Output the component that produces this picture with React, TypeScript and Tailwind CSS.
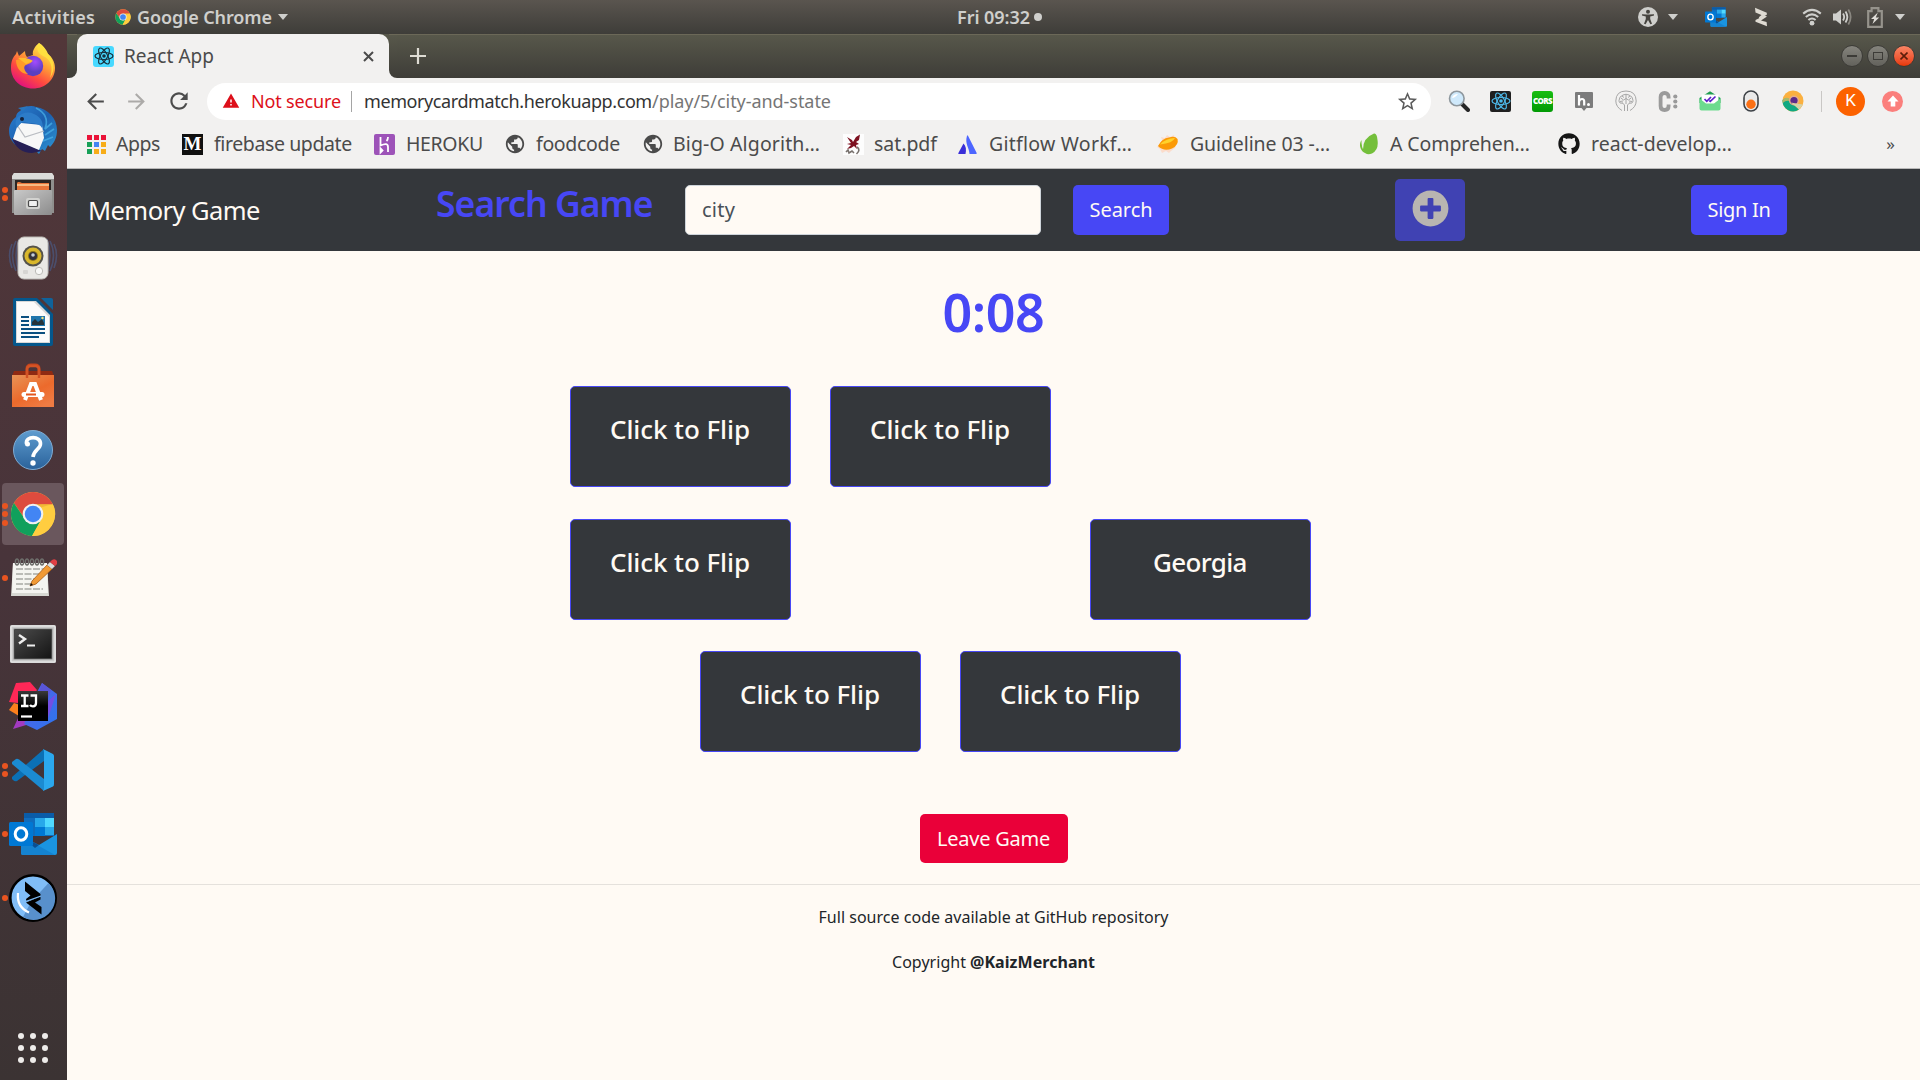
import { useLayoutEffect, useRef, type ReactNode } from "react";
import { FaGithub, FaPlusCircle } from "react-icons/fa";
import { MdPublic, MdRefresh, MdArrowBack, MdArrowForward, MdStarBorder, MdWarning } from "react-icons/md";

/* Text that spreads its letters evenly so that it fills the given width. */
function Fit({ w, className = "", children }: { w: number; className?: string; children: ReactNode }) {
  const inner = useRef<HTMLSpanElement>(null);
  useLayoutEffect(() => {
    const el = inner.current;
    if (!el) return;
    el.style.letterSpacing = "0px";
    const natural = el.getBoundingClientRect().width;
    const count = (el.textContent || "").length;
    el.style.letterSpacing = `${(w - natural) / Math.max(1, count - 0.5)}px`;
  }, [w]);
  return (
    <span style={{ width: w }} className={`block shrink-0 whitespace-nowrap ${className}`}>
      <span ref={inner}>{children}</span>
    </span>
  );
}

function ReactLogo({ size, color }: { size: number; color: string }) {
  return (
    <svg width={size} height={size} viewBox="0 0 20 20" fill="none" stroke={color} strokeWidth="1.2" className="shrink-0">
      <ellipse cx="10" cy="10" rx="9" ry="3.5" />
      <ellipse cx="10" cy="10" rx="9" ry="3.5" transform="rotate(60 10 10)" />
      <ellipse cx="10" cy="10" rx="9" ry="3.5" transform="rotate(120 10 10)" />
      <circle cx="10" cy="10" r="1.8" fill={color} stroke="none" />
    </svg>
  );
}

function ChromeLogo({ size }: { size: number }) {
  return (
    <svg width={size} height={size} viewBox="0 0 48 48" className="shrink-0">
      <circle cx="24" cy="24" r="23" fill="#ffcd40" />
      <path d="M4.1 12.5A23 23 0 0 1 43.9 12.5L44.3 14H24L15.5 29Z" fill="#dd4b3e" />
      <path d="M4.1 12.5A23 23 0 0 0 23 47L33 29.5L24 34.5L15.3 29Z" fill="#10a05c" />
      <path d="M43.9 12.5A23 23 0 0 1 23 47L33 29L31 14H44.5Z" fill="#ffcd40" />
      <path d="M24 13.5H44.4L33 17Z" fill="#e3a42e" opacity=".5" />
      <circle cx="24" cy="24" r="10.8" fill="#f1f1f1" />
      <circle cx="24" cy="24" r="8.6" fill="#4285f4" />
    </svg>
  );
}

function OutlookLogo({ size }: { size: number }) {
  return (
    <svg width={size} height={size} viewBox="0 0 48 48" className="shrink-0">
      <path d="M15 3H45V26H15Z" fill="#0f6cbd" />
      <path d="M15 3H45V8H15Z" fill="#0a5ca8" />
      <path d="M26 8H36V17H26Z" fill="#28a8ea" />
      <path d="M36 8H45V17H36Z" fill="#50d9ff" />
      <path d="M26 17H36V26H26Z" fill="#0078d4" />
      <path d="M36 17H45V25H36Z" fill="#28a8ea" />
      <path d="M12 26L30 35L48 24V43Q48 45 46 45H14Q12 45 12 43Z" fill="#1a94e0" />
      <path d="M12 26L46 45H14Q12 45 12 43Z" fill="#1583d0" />
      <path d="M12 26L30 35L26 38Z" fill="#0a4f92" />
      <rect x="0" y="12" width="24" height="24" rx="1.5" fill="#0078d4" />
      <ellipse cx="12" cy="24" rx="5.8" ry="6.2" fill="none" stroke="#fff" strokeWidth="3" />
    </svg>
  );
}

function Caret() {
  return (
    <svg width="10" height="6" viewBox="0 0 10 6" className="shrink-0">
      <path d="M0 0H10L5 6Z" fill="#cfcfcc" />
    </svg>
  );
}

function TopBar() {
  return (
    <header className="flex h-[34px] shrink-0 items-center bg-linear-to-b from-[#5a554f] to-[#3e3d39] text-[18px] font-semibold text-[#cfcfcc]">
      <Fit w={83} className="ml-3">Activities</Fit>
      <div className="ml-[20px] flex"><ChromeLogo size={16} /></div>
      <Fit w={135} className="ml-[6px]">Google Chrome</Fit>
      <div className="ml-[6px] flex"><Caret /></div>
      <Fit w={73} className="ml-[669px]">Fri 09:32</Fit>
      <span className="ml-1 h-2 w-2 rounded-full bg-[#cfcfcc]" />
      <div className="ml-auto flex items-center pr-[15px]">
        <svg width="20" height="20" viewBox="0 0 20 20">
          <circle cx="10" cy="10" r="10" fill="#cfcfcc" />
          <circle cx="10" cy="4.8" r="2" fill="#46443f" />
          <path d="M4 7.2L8.600 7.600H11.400L16 7.200V8.500L12.200 9.400V12L14 16.800L12.400 17.200L10 13L7.600 17.200L6 16.800L7.800 12V9.400L4 8.500Z" fill="#46443f" />
        </svg>
        <div className="ml-[10px] flex"><Caret /></div>
        <div className="ml-[27px] flex"><OutlookLogo size={22} /></div>
        <svg width="14" height="20" viewBox="0 0 14 20" className="ml-[27px]">
          <path d="M1 .8L12.800 5.800V7.800L5.600 11.500L4.800 10.200L7.500 8L1.500 5.500Z" fill="#dfdbd3" />
          <path d="M10.500 8.500L1.500 13V14.800L13 19.300L12.600 15L7 13.500L13 9.600Z" fill="#dfdbd3" />
        </svg>
        <svg width="20" height="18" viewBox="0 0 20 18" className="ml-[34px]" fill="none" stroke="#cfcfcc" strokeWidth="2.1">
          <path d="M1.200 5.600Q10-1.800 18.800 5.600" />
          <path d="M3.800 9Q10 3.800 16.200 9" />
          <path d="M6.400 12Q10 9 13.600 12" />
          <circle cx="10" cy="15.200" r="2.400" fill="#cfcfcc" stroke="none" />
        </svg>
        <svg width="20" height="16" viewBox="0 0 20 16" className="ml-[11px]" fill="none" stroke="#cfcfcc" strokeWidth="1.800">
          <path d="M0 4.500H3L8 .5V15.500L3 11.500H0Z" fill="#cfcfcc" stroke="none" />
          <path d="M10 4.500Q12.300 8 10 11.500" />
          <path d="M12.500 2.500Q16.200 8 12.500 13.500" />
          <path d="M15.300 .5Q20 8 15.300 15.500" stroke="#8a8780" />
        </svg>
        <svg width="16" height="21" viewBox="0 0 16 21" className="ml-[14px]">
          <path d="M1.200 4.200H4.600V1.200H11.400V4.200H14.800V19.800H1.200Z" fill="none" stroke="#96938c" strokeWidth="2.200" />
          <path d="M10.800 5.500L4 12H7.200L5.500 17L12.200 10.600H8.800Z" fill="#e0ddd8" />
        </svg>
        <div className="ml-[12px] flex"><Caret /></div>
      </div>
    </header>
  );
}

function FirefoxIcon() {
  return (
    <svg width="48" height="48" viewBox="0 0 48 48">
      <defs>
        <linearGradient id="ffBody" x1="0.85" y1="0.1" x2="0.3" y2="1">
          <stop offset="0" stopColor="#fff44f" />
          <stop offset=".35" stopColor="#ffa436" />
          <stop offset=".68" stopColor="#ff4a3f" />
          <stop offset="1" stopColor="#e0107f" />
        </linearGradient>
        <radialGradient id="ffGlobe" cx=".6" cy=".3">
          <stop offset="0" stopColor="#a34bff" />
          <stop offset="1" stopColor="#5b3fc0" />
        </radialGradient>
      </defs>
      <path d="M30 1C36 5 38 9 39 12C43 15 46 20 46 26C46 38 36 46.500 24 46.500C11 46.500 2 37 2 26C2 19 4 15 7 12L8 9L10 14L16 9C16 12 17 14 18 15L24 13C23 9 26 4 30 1Z" fill="url(#ffBody)" />
      <path d="M37 10C45 16 47 28 41 36C45 24 41 17 34 14C28 11 27 6 30 1C34 3 36 7 37 10Z" fill="#ffe23e" opacity=".85" />
      <circle cx="24" cy="24" r="10.200" fill="url(#ffGlobe)" />
      <path d="M7 18C13 16 20 17 23 19C22 22 18 22 17 23C14 24 15 29 19 32C12 32 7 26 7 18Z" fill="#ff9b28" />
      <path d="M9 16C16 15 21 17 24 19L17 22Z" fill="#ffbd2d" />
    </svg>
  );
}

function ThunderbirdIcon() {
  return (
    <svg width="50" height="50" viewBox="0 0 50 50">
      <defs>
        <linearGradient id="tb" x1="0" y1="0" x2="1" y2="1">
          <stop offset="0" stopColor="#2a7fd0" />
          <stop offset=".5" stopColor="#1c5fae" />
          <stop offset="1" stopColor="#2f9ad8" />
        </linearGradient>
      </defs>
      <path d="M12 6C16 1 24 0 28 2C40 4 49 13 49 25C49 33 46 38 42 42L40 40L37 46L34 44L31 49L28 46C14 47 1 39 1 26C1 20 4 15 8 12C8 9 10 7 12 6Z" fill="url(#tb)" />
      <path d="M4 33L34 46L24 48C14 48 7 42 4 33Z" fill="#261f56" />
      <path d="M13 18L34 20L36 33L31 45L5 34L9 22Z" fill="#f7f7f7" />
      <path d="M9 20L17 32L36 26" fill="none" stroke="#b9bcc2" strokeWidth="1.200" />
      <path d="M9 13C13 8 20 6 26 9C33 12 36 18 34 23C31 17 22 19 16 17C13 17 11 20 9 23C7 20 7 16 9 13Z" fill="#2d7cc9" />
      <path d="M28 3C38 8 40 16 37 24L44 18M37 30L46 24M35 36L45 32" fill="none" stroke="#4cb4ea" strokeWidth="1.700" opacity=".7" />
      <circle cx="14" cy="14" r="2" fill="#15233d" />
      <path d="M10 3L20 1L15 6Z" fill="#2977be" />
    </svg>
  );
}

function FilesIcon() {
  return (
    <svg width="46" height="46" viewBox="0 0 46 46">
      <defs>
        <linearGradient id="fl" x1="0" y1="0" x2="1" y2="1">
          <stop offset="0" stopColor="#c9c9c9" />
          <stop offset="1" stopColor="#8c8c8c" />
        </linearGradient>
      </defs>
      <path d="M4 2H42L44 5V42H2V5Z" fill="#8f8f8d" />
      <path d="M4 2H42L44 5V8H2V5Z" fill="#dcdcda" />
      <rect x="5" y="9" width="36" height="10" fill="#2b2523" />
      <path d="M7 12Q8 10 12 12H39V19H7Z" fill="#e8763a" />
      <path d="M7 14H39" stroke="#fbd29d" strokeWidth="1.500" />
      <rect x="4" y="19" width="38" height="25" rx="1" fill="url(#fl)" />
      <rect x="16" y="27" width="14" height="11" rx="2" fill="#d2d2d0" />
      <rect x="18.500" y="29.500" width="9" height="6" rx="1" fill="#f0f0f0" stroke="#4b4b4b" strokeWidth="1.200" />
    </svg>
  );
}

function RhythmboxIcon() {
  return (
    <svg width="50" height="46" viewBox="0 0 50 46">
      <g fill="none" stroke="#4a5f8e" strokeWidth="1.600" opacity=".6">
        <path d="M8 6Q1 20 8 36M4 9Q-1 20 4 33M42 6Q49 20 42 36M46 9Q51 20 46 33M11 4Q5 20 11 38M39 4Q45 20 39 38" />
      </g>
      <rect x="10" y="2" width="30" height="42" rx="6" fill="#e9e8e5" stroke="#bdbbb6" />
      <circle cx="25" cy="21" r="10.500" fill="#55534b" />
      <circle cx="25" cy="21" r="8.500" fill="#d9b72c" />
      <circle cx="25" cy="21" r="5" fill="#8c741c" />
      <circle cx="25" cy="21" r="4" fill="#33323a" />
      <circle cx="25" cy="20" r="1.800" fill="#c5ced8" />
      <circle cx="31" cy="36" r="3.700" fill="#f8f8f6" stroke="#bcbbb7" />
      <rect x="15" y="35" width="5" height="4" rx="1" fill="#d6d5d2" />
    </svg>
  );
}

function WriterIcon() {
  return (
    <svg width="42" height="50" viewBox="0 0 42 50">
      <path d="M1 3Q1 1 3 1H25L41 17V47Q41 49 39 49H3Q1 49 1 47Z" fill="#04578c" />
      <path d="M29 1H39Q41 1 41 3V13Z" fill="#0f639b" />
      <path d="M4 4H24L38 18V46H4Z" fill="#d7d7d7" />
      <path d="M5 5H22L37 20V45H5Z" fill="#fbfbfb" />
      <path d="M9 20H17M9 24H17M9 28H17M9 32H33M9 36H33M9 40H27" stroke="#0a4f80" strokeWidth="2" />
      <rect x="19" y="19" width="14" height="10" fill="#1f76ad" />
      <path d="M20 28V25L23 22L26 25L30 22L32 26V28Z" fill="#27343a" />
      <circle cx="30.500" cy="21" r="1.200" fill="#f5e37d" />
    </svg>
  );
}

function SoftwareIcon() {
  return (
    <svg width="44" height="46" viewBox="0 0 44 46">
      <defs>
        <linearGradient id="bag" x1="0" y1="0" x2=".7" y2="1">
          <stop offset="0" stopColor="#e79457" />
          <stop offset=".6" stopColor="#ec6a2c" />
          <stop offset="1" stopColor="#ef7b43" />
        </linearGradient>
      </defs>
      <path d="M1 13L3 8H41L43 13Z" fill="#8f2a12" />
      <path d="M16 15V6Q16 2 20 2H24Q28 2 28 6V15" fill="none" stroke="#c7451c" strokeWidth="3" />
      <path d="M1 12H43V44H1Z" fill="url(#bag)" />
      <path d="M16 15V6Q16 4 19 3H25Q28 4 28 6V15" fill="none" stroke="#d35325" strokeWidth="2.400" />
      <path d="M14 37L20 21H24L30 37M17 31H27" fill="none" stroke="#fff" strokeWidth="4" />
      <path d="M13 31.500H31" stroke="#fff" strokeWidth="5" strokeLinecap="round" />
      <path d="M15 31.500H25" stroke="#e2571f" strokeWidth="2" />
    </svg>
  );
}

function HelpIcon() {
  return (
    <svg width="44" height="44" viewBox="0 0 44 44">
      <defs>
        <linearGradient id="hp" x1="0" y1="0" x2="0" y2="1">
          <stop offset="0" stopColor="#5f9ccf" />
          <stop offset="1" stopColor="#2a629b" />
        </linearGradient>
      </defs>
      <circle cx="22" cy="22" r="19.500" fill="url(#hp)" stroke="#7facd4" strokeWidth="1" />
      <path d="M15.500 16C14 7.500 30 7.500 29.500 16C29.500 21 22.500 22 22 29" fill="none" stroke="#fff" strokeWidth="3.600" />
      <circle cx="16.500" cy="16" r="2.500" fill="#fff" />
      <circle cx="22" cy="35" r="2.700" fill="#fff" />
    </svg>
  );
}

function EditorIcon() {
  return (
    <svg width="48" height="42" viewBox="0 0 48 42">
      <path d="M4 6H38L40 39H2Z" fill="#d8d9d3" />
      <path d="M4 6H38L39 36H3Z" fill="#f5f5f1" />
      <path d="M7 12H35M7 17H32M7 22H30M7 27H26M7 32H34" stroke="#a8a9a4" strokeWidth="1.300" strokeDasharray="7 1.500" />
      <g fill="none" stroke="#6d6e6b" strokeWidth="1.500">
        <ellipse cx="8" cy="5" rx="1.600" ry="3" /><ellipse cx="13" cy="5" rx="1.600" ry="3" /><ellipse cx="18" cy="5" rx="1.600" ry="3" />
        <ellipse cx="23" cy="5" rx="1.600" ry="3" /><ellipse cx="28" cy="5" rx="1.600" ry="3" /><ellipse cx="33" cy="5" rx="1.600" ry="3" />
      </g>
      <path d="M21 29L23 24L38 8L43 12L27 27Z" fill="#f19a35" stroke="#a85c16" strokeWidth=".8" />
      <path d="M38 8L41 5L46 9L43 12Z" fill="#d9dcdc" />
      <path d="M41 5L43 3Q46 1 48 4Q49 7 46 9Z" fill="#df3e44" />
      <path d="M21 29L22 26L24 28Z" fill="#111" />
    </svg>
  );
}

function TerminalIcon() {
  return (
    <svg width="46" height="38" viewBox="0 0 46 38" className="mt-[4px]">
      <defs>
        <linearGradient id="tm" x1="0" y1="0" x2="1" y2="1">
          <stop offset="0" stopColor="#4a4a4a" />
          <stop offset="1" stopColor="#151515" />
        </linearGradient>
      </defs>
      <rect x="0" y="0" width="46" height="38" rx="1.500" fill="#c9c9c9" />
      <rect x="1" y="1" width="44" height="36" rx="1" fill="none" stroke="#efefef" />
      <rect x="4" y="4" width="38" height="30" fill="#222" stroke="#777" strokeWidth=".8" />
      <path d="M5 5H41V33H5Z" fill="url(#tm)" />
      <path d="M9 10L15 14L9 18.500" fill="none" stroke="#eee" strokeWidth="2.400" />
      <path d="M17 20.500H25" stroke="#eee" strokeWidth="2" />
    </svg>
  );
}

function IntellijIcon() {
  return (
    <svg width="48" height="48" viewBox="0 0 48 48">
      <defs>
        <linearGradient id="ijb" x1="0" y1="0" x2="1" y2="1">
          <stop offset="0" stopColor="#5b5ce0" />
          <stop offset="1" stopColor="#2b76f0" />
        </linearGradient>
        <linearGradient id="ijk" x1="0" y1="0" x2="0" y2="1">
          <stop offset="0" stopColor="#3a3a3a" />
          <stop offset=".5" stopColor="#000" />
        </linearGradient>
      </defs>
      <path d="M7 1L21 0L28 8L18 22L0 20Z" fill="#fe2857" />
      <path d="M5 21L14 24L10 34L0 28Z" fill="#fc801d" />
      <path d="M10 34L4 47L27 40L24 28Z" fill="#a23ac0" />
      <path d="M33 1L48 12V37L28 48L15 42L28 10Z" fill="url(#ijb)" />
      <path d="M33 1L42 8L38 20L26 24Z" fill="#5a55d8" />
      <path d="M39 19L47 12L39 36Z" fill="#8b42e0" opacity=".7" />
      <rect x="9" y="9" width="30" height="30" fill="url(#ijk)" />
      <path d="M12 13.500H19.500M15.700 13.500V24M12 24H19.500M21.500 13.500H27V21Q27 24.300 24 24.300Q22 24.300 21 23" fill="none" stroke="#fff" strokeWidth="2.300" />
      <path d="M12 34.500H23" stroke="#fff" strokeWidth="2.200" />
    </svg>
  );
}

function VsCodeIcon() {
  return (
    <svg width="42" height="42" viewBox="0 0 42 42">
      <path d="M0 28L32 0V12L5 32Q3 33 1 31L0 30Z" fill="#0b70b5" />
      <path d="M0 13L4 10Q5.500 9.500 7 10.500L32 30V42L0 15Z" fill="#1b8bd2" />
      <path d="M31 0L41 5Q42 6 42 7V35Q42 37 41 37.500L31 42Q32 41 32 39V3Q32 1 31 0Z" fill="#2ba8ee" />
    </svg>
  );
}

function ZealIcon() {
  return (
    <svg width="48" height="48" viewBox="0 0 48 48">
      <circle cx="24" cy="24" r="22.700" fill="#80bdf7" stroke="#000" strokeWidth="2.600" />
      <path d="M39.500 9A21.400 21.400 0 0 1 14 43L22 28Z" fill="#5890cc" />
      <path d="M9 19Q7.500 33 20 38.500" fill="none" stroke="#fff" strokeWidth="2.200" />
      <path d="M16 7.500L31.500 20V22.500L17.500 27.500L17 25L21.500 21.500L16 17Z" fill="#000" />
      <path d="M31.500 22.500L17 28.500L32.500 40.500V33L26 28.500L31.500 25.500Z" fill="#000" />
      <path d="M16.500 27.500L32 22" stroke="#80bdf7" strokeWidth="1.300" />
    </svg>
  );
}

const DOCK: { icon: ReactNode; dots: number; active?: boolean }[] = [
  { icon: <FirefoxIcon />, dots: 0 },
  { icon: <ThunderbirdIcon />, dots: 0 },
  { icon: <FilesIcon />, dots: 2 },
  { icon: <RhythmboxIcon />, dots: 0 },
  { icon: <WriterIcon />, dots: 0 },
  { icon: <SoftwareIcon />, dots: 0 },
  { icon: <HelpIcon />, dots: 0 },
  { icon: <ChromeLogo size={46} />, dots: 3, active: true },
  { icon: <EditorIcon />, dots: 1 },
  { icon: <TerminalIcon />, dots: 0 },
  { icon: <IntellijIcon />, dots: 0 },
  { icon: <VsCodeIcon />, dots: 2 },
  { icon: <OutlookLogo size={48} />, dots: 1 },
  { icon: <ZealIcon />, dots: 1 },
];

function Dock() {
  return (
    <aside className="flex w-[67px] shrink-0 flex-col bg-linear-to-b from-[#523739] via-[#48343a] to-[#3b3333]">
      {DOCK.map((item, i) => (
        <div key={i} className="flex h-16 shrink-0 items-center">
          <div className={`ml-0.5 flex h-[62px] w-[62px] items-center rounded-[4px] ${item.active ? "bg-[#6a575d]" : ""}`}>
            <div className="flex w-[6px] shrink-0 flex-col gap-[2.5px]">
              {Array.from({ length: item.dots }, (_, d) => (
                <span key={d} className="h-[6px] w-[6px] rounded-full bg-[#e95420]" />
              ))}
            </div>
            <div className="-ml-[2px] flex w-[54px] shrink-0 justify-center">{item.icon}</div>
          </div>
        </div>
      ))}
      <div className="mt-auto mb-[17px] grid grid-cols-3 gap-[6px] self-center pr-px">
        {Array.from({ length: 9 }, (_, i) => (
          <span key={i} className="h-[6px] w-[6px] rounded-full bg-[#eeecea]" />
        ))}
      </div>
    </aside>
  );
}

function TabStrip() {
  return (
    <div className="flex h-11 shrink-0 items-stretch bg-linear-to-b from-[#58584b] to-[#3e3d38]">
      <div className="flex w-[10px] items-end bg-[#f2f1f0]">
        <span className="h-full w-full rounded-br-[8px] border-t border-[#6b6858] bg-linear-to-b from-[#58584b] to-[#3e3d38]" />
      </div>
      <div className="flex w-[312px] items-center rounded-t-[10px] bg-[#f2f1f0] pl-4 text-[#4b4b4b]">
        <span className="flex h-[21px] w-[21px] items-center justify-center rounded-[3px] bg-[#48d9ff]"><ReactLogo size={20} color="#17303c" /></span>
        <Fit w={90} className="ml-[10px] text-[19px] leading-[20px]">React App</Fit>
        <svg width="11" height="11" viewBox="0 0 11 11" className="mr-[15px] ml-auto">
          <path d="M1 1L10 10M10 1L1 10" stroke="#4b4b4b" strokeWidth="2" />
        </svg>
      </div>
      <div className="flex w-[8px] bg-[#f2f1f0]">
        <span className="h-full w-full rounded-bl-[8px] border-t border-[#6b6858] bg-linear-to-b from-[#58584b] to-[#3e3d38]" />
      </div>
      <div className="flex flex-1 items-center border-t border-[#6b6858] pb-px">
        <svg width="16" height="16" viewBox="0 0 16 16" className="ml-[13px]">
          <path d="M8 0V16M0 8H16" stroke="#dedcd4" strokeWidth="2.200" />
        </svg>
        <div className="ml-auto flex items-center gap-[4px] pr-[5px]">
          <span className="flex h-[22px] w-[22px] items-center justify-center rounded-full border border-[#3c3b37] bg-linear-to-b from-[#85847d] to-[#63625c]">
            <span className="h-[1.5px] w-[10px] bg-[#3c3b37]" />
          </span>
          <span className="flex h-[22px] w-[22px] items-center justify-center rounded-full border border-[#3c3b37] bg-linear-to-b from-[#85847d] to-[#63625c]">
            <span className="h-[8px] w-[10px] border-[1.5px] border-[#3c3b37]" />
          </span>
          <span className="flex h-[22px] w-[22px] items-center justify-center rounded-full border border-[#3c3b37] bg-linear-to-b from-[#f98463] to-[#e83600]">
            <svg width="8" height="8" viewBox="0 0 8 8"><path d="M.5 .5L7.500 7.500M7.500 .5L.5 7.500" stroke="#5d1d0a" strokeWidth="1.600" /></svg>
          </span>
        </div>
      </div>
    </div>
  );
}

const EXTENSIONS: ReactNode[] = [
  <svg width="22" height="22" viewBox="0 0 22 22">
    <path d="M14 14L20 20" stroke="#262626" strokeWidth="4" strokeLinecap="round" />
    <circle cx="8.800" cy="8.500" r="7.300" fill="#cfe9fb" stroke="#8e979d" strokeWidth="1.600" />
    <path d="M4 8Q5 4 10 4Q7 8 4 8Z" fill="#fff" />
  </svg>,
  <span className="flex h-[21px] w-[21px] shrink-0 items-center justify-center rounded-[2px] bg-[#202020]"><ReactLogo size={20} color="#4db8e8" /></span>,
  <span className="flex h-[21px] w-[21px] shrink-0 items-center justify-center rounded-[3px] bg-linear-to-b from-[#17bd10] to-[#029a05] font-['Open_Sans'] text-[8px] font-extrabold tracking-[-0.6px] text-white">CORS</span>,
  <svg width="18" height="21" viewBox="0 0 18 21">
    <path d="M1 1H17Q18 1 18 2V16Q18 17 17 17H11.500L9 20L6.500 17H1Q0 17 0 16V2Q0 1 1 1Z" fill="#7c7c7c" />
    <path d="M4 4V14.500M4 10.500Q5 8 7 8Q9.200 8 9.200 10.500V14.500" fill="none" stroke="#fff" strokeWidth="2.200" />
    <circle cx="13.500" cy="13.500" r="1.500" fill="#fff" />
  </svg>,
  <svg width="22" height="22" viewBox="0 0 22 22" fill="none" stroke="#a6a6a6" strokeWidth="1">
    <path d="M7 20.500Q1 17 .8 11Q1 1 11 1Q21 1 21.200 11Q21 17 15 20.500" />
    <path d="M9.500 21V15L7 12.500M12.500 21V15L15 12.500M11 14V4.500M8 13Q4 14 4 10.500Q4 6.500 8 5Q11 3.500 14 5Q18 6.500 18 10.500Q18 14 14 13M6 8L8.500 10L11 8.500M16 8L13.500 10L11 8.500M5 11.500L8 11M17 11.500L14 11M7 6L9 7.500M15 6L13 7.500" />
  </svg>,
  <svg width="20" height="21" viewBox="0 0 20 21">
    <path d="M10.600 7.500V6Q10.600 2 6.600 2Q2.600 2 2.600 6V15Q2.600 19 6.600 19Q10.600 19 10.600 15V13.500" fill="none" stroke="#9a9a9a" strokeWidth="3.800" />
    <g fill="#9a9a9a"><circle cx="17.300" cy="5.500" r="2.100" /><circle cx="17.300" cy="10.500" r="2.100" /><circle cx="17.300" cy="15.500" r="2.100" /></g>
  </svg>,
  <svg width="22" height="20" viewBox="0 0 22 20">
    <path d="M.5 7L11 .3L21.500 7V12H.5Z" fill="#1f9e50" />
    <path d="M2.500 3.500H19.500V14H2.500Z" fill="#fff" />
    <path d="M.5 7.500L7 12.500H15L21.500 7.500V17.500Q21.500 19.500 19.500 19.500H2.500Q.5 19.500 .5 17.500Z" fill="#6cdb8e" />
    <path d="M5.500 8L7.800 10.300L12 6M10.300 9.500L11.300 10.300L16.500 5.500" fill="none" stroke="#5c1fc9" strokeWidth="1.700" />
  </svg>,
  <svg width="16" height="22" viewBox="0 0 16 22">
    <rect x="1" y="1" width="14" height="20" rx="7" fill="#e9e9e9" stroke="#3d4146" strokeWidth="1.600" />
    <circle cx="8" cy="14.300" r="4.700" fill="#fb7014" />
  </svg>,
  <svg width="22" height="22" viewBox="0 0 22 22">
    <circle cx="11" cy="11" r="10.500" fill="#fbb040" />
    <path d="M.6 10A10.500 10.500 0 0 0 17 19.500L9 11Q5 6 .6 10Z" fill="#0fa982" />
    <path d="M.6 10Q4 6 8 9L9 12Q5 9 .8 13Z" fill="#a9b86a" />
    <circle cx="12" cy="10.500" r="5" fill="#e6ae8c" />
    <circle cx="12" cy="10.500" r="3.600" fill="#5c2a8a" />
    <path d="M9 12.500L17 19.500L21 14.500L14 13.500Z" fill="#d5d3a8" />
  </svg>,
];

function Toolbar() {
  return (
    <div className="flex h-[46px] shrink-0 items-center bg-[#f2f1f0] text-[18px]">
      <MdArrowBack size={25} className="ml-[16px] text-[#4c4c4c]" />
      <MdArrowForward size={25} className="ml-[16px] text-[#acaaa8]" />
      <MdRefresh size={26} className="ml-[17px] text-[#4c4c4c]" />
      <div className="ml-[15px] flex h-[37px] w-[1224px] shrink-0 items-center rounded-full bg-white pl-[15px]">
        <MdWarning size={18} className="text-[#dd0f1a]" />
        <Fit w={90} className="ml-[11px] text-[#dd0f1a]">Not secure</Fit>
        <span className="ml-[10px] h-[21px] w-px bg-[#a5a5a5]" />
        <Fit w={288} className="ml-[12px] text-[#333]">memorycardmatch.herokuapp.com</Fit>
        <Fit w={179} className="text-[#757575]">/play/5/city-and-state</Fit>
        <MdStarBorder size={23} className="mr-[12px] ml-auto text-[#5b5b5b]" />
      </div>
      <div className="ml-[17px] flex shrink-0 gap-[19.75px]">
        {EXTENSIONS.map((icon, i) => (
          <span key={i} className="flex h-[22px] w-[22px] shrink-0 items-center justify-center">{icon}</span>
        ))}
      </div>
      <span className="ml-[17px] h-[21px] w-px bg-[#c9c7c5]" />
      <span className="ml-[14px] flex h-[29px] w-[29px] shrink-0 items-center justify-center rounded-full bg-[#fc6200] font-['Roboto'] text-[17px] text-white">K</span>
      <span className="ml-[17px] flex h-[21px] w-[21px] shrink-0 items-center justify-center rounded-full bg-[#fb7f7c]">
        <svg width="12" height="12" viewBox="0 0 12 12"><path d="M6 .5L11.500 6.500H8.300V11.500H3.700V6.500H.5Z" fill="#fff" /></svg>
      </span>
    </div>
  );
}

const APP_DOTS = [
  "bg-[#ea1338]", "bg-[#ea1338]", "bg-[#ea1338]",
  "bg-[#17a057]", "bg-[#4285f4]", "bg-[#f7ad19]",
  "bg-[#17a057]", "bg-[#f7ad19]", "bg-[#f7ad19]",
];

function Bookmarks() {
  return (
    <div className="flex h-[44px] shrink-0 items-center bg-[#f2f1f0] pb-1 text-[19.5px] text-[#4b4b4b]">
      <div className="ml-[20px] grid grid-cols-3 gap-x-[2px] gap-y-[2px]">
        {APP_DOTS.map((c, i) => <span key={i} className={`h-[5px] w-[5px] ${c}`} />)}
      </div>
      <Fit w={44} className="ml-[10px]">Apps</Fit>
      <span className="ml-[22px] flex h-[21px] w-[21px] shrink-0 items-center justify-center bg-[#111] font-['Liberation_Serif'] text-[19px] font-bold text-white">M</span>
      <Fit w={138} className="ml-[11px]">firebase update</Fit>
      <svg width="21" height="21" viewBox="0 0 21 21" className="ml-[22px] shrink-0">
        <rect width="21" height="21" rx="2" fill="#9d53b8" />
        <path d="M6.500 3V11.500Q14 8 14 13V18M14 3Q14 5.500 12.500 7M6.500 14.500L8.500 16.500L6.500 18.500Z" fill="none" stroke="#fff" strokeWidth="1.800" />
      </svg>
      <Fit w={77} className="ml-[11px]">HEROKU</Fit>
      <MdPublic size={22} className="ml-[21px] shrink-0" />
      <Fit w={84} className="ml-[10px]">foodcode</Fit>
      <MdPublic size={22} className="ml-[22px] shrink-0" />
      <Fit w={147} className="ml-[9px]">Big-O Algorith…</Fit>
      <svg width="21" height="21" viewBox="0 0 21 21" className="ml-[23px] shrink-0">
        <rect width="21" height="21" fill="#fdfdfd" />
        <path d="M4 3L9 6L10 8L13 3L17 0.500L16 6L13 8L16 10L13 11L14 15L11 12L8 14L4 15L8 11L4 10L8 9Z" fill="#7d1020" />
        <path d="M14 13Q18 16 13.500 20M3 18L5 16L6 19L9 17L11 19" fill="none" stroke="#77706c" strokeWidth="1.600" />
      </svg>
      <Fit w={63} className="ml-[10px]">sat.pdf</Fit>
      <svg width="19" height="19" viewBox="0 0 19 19" className="ml-[21px] shrink-0">
        <path d="M5.500 8.500Q9 12 7.500 19H.7Q0 19 .4 18Z" fill="#3a2fd8" />
        <path d="M9 .7Q9.500 0 10 .7L18.700 18Q19 19 18 19H11.500C11.500 13 6.500 9 9 .7Z" fill="#4d66ff" />
      </svg>
      <Fit w={143} className="ml-[12px]">Gitflow Workf…</Fit>
      <svg width="22" height="20" viewBox="0 0 22 20" className="ml-[25px] shrink-0">
        <path d="M3 15L0 13L2 11L5 6L4 3L8 4L10 1L13 3L17 1L18 4L21 5L20 9L18 14L14 17L12 19L9 17L5 19Z" fill="#fbdccb" />
        <path d="M1 12Q5 4 12 3.500Q18 1.500 20.500 5Q22 11 15 14.500Q7 18 1 12Z" fill="#fb9a07" />
        <path d="M3 10.500Q9 4 18 4Q16 9 3 10.500Z" fill="#ffd22b" />
      </svg>
      <Fit w={140} className="ml-[11px]">Guideline 03 -…</Fit>
      <svg width="20" height="22" viewBox="0 0 20 22" className="ml-[29px] shrink-0">
        <path d="M15 .5Q18 0 18.500 7Q20 17 13 20.500Q7 23 4 17.500Q3.500 5 15 .5Z" fill="#74bf3b" />
        <path d="M2.500 7Q0 11 1.500 15Q3 19 6 20Q2 14 2.500 7Z" fill="#74bf3b" />
      </svg>
      <Fit w={140} className="ml-[11px]">A Comprehen…</Fit>
      <FaGithub size={22} className="ml-[28px] shrink-0 text-[#161616]" />
      <Fit w={141} className="ml-[11px]">react-develop…</Fit>
      <span className="mr-[25px] ml-auto text-[17px]">»</span>
    </div>
  );
}

function NavBar() {
  return (
    <nav className="flex h-[83px] shrink-0 items-center border-t border-[#b9b8b8] bg-[#34373b] text-[20px] text-[#fffaf4]">
      <Fit w={172} className="ml-[21px] text-[25.500px]">Memory Game</Fit>
      <Fit w={217} className="-mt-[12px] ml-[176px] text-[35.500px] leading-none font-semibold text-[#4747f5]">Search Game</Fit>
      <div className="ml-[32px] flex h-[50px] w-[356px] shrink-0 items-center rounded-[5px] border border-[#ced4da] bg-[#fffaf4] pl-4 text-[#495057]">
        <Fit w={33}>city</Fit>
      </div>
      <button className="ml-8 flex h-[50px] w-24 shrink-0 items-center justify-center rounded-[5px] bg-[#4747f5]"><Fit w={63}>Search</Fit></button>
      <button className="ml-[226px] flex h-[62px] w-[70px] shrink-0 items-center justify-center rounded-[5px] bg-[#4042b3] pb-1 text-[#b8b5b1]">
        <FaPlusCircle size={37} />
      </button>
      <button className="ml-[226px] flex h-[50px] w-24 shrink-0 items-center justify-center rounded-[5px] bg-[#4747f5]"><Fit w={63}>Sign In</Fit></button>
    </nav>
  );
}

function Card({ label = "Click to Flip", w = 140 }: { label?: string; w?: number }) {
  return (
    <div className="flex h-[101px] w-[221px] shrink-0 justify-center rounded-[5px] border border-[#4747f5] bg-[#34373b] pt-[25px] text-[26px] leading-[34px] font-medium text-[#fffaf4]">
      <Fit w={w}>{label}</Fit>
    </div>
  );
}

function Game() {
  return (
    <main className="flex min-h-0 flex-1 flex-col items-center bg-[#fffaf4] text-[#212529]">
      <h1 className="mt-[36px] flex h-[50px] items-center text-[52px] leading-none font-semibold text-[#4747f5]"><Fit w={102}>0:08</Fit></h1>
      <div className="mt-[49px] mr-[107px] flex w-[741px] flex-col gap-[31.5px]">
        <div className="flex gap-[39px]"><Card /><Card /></div>
        <div className="flex justify-between"><Card /><Card label="Georgia" w={94} /></div>
        <div className="flex justify-center gap-[39px]"><Card /><Card /></div>
      </div>
      <button className="mt-[62px] flex h-[49px] w-[148px] shrink-0 items-center justify-center rounded-[5px] bg-[#ea0039] text-[20px] text-[#fffaf4]"><Fit w={113}>Leave Game</Fit></button>
      <hr className="mt-[21px] w-full border-t border-[#e5e1dc]" />
      <p className="mt-5 flex text-[16px] leading-6"><Fit w={350}>Full source code available at GitHub repository</Fit></p>
      <p className="mt-[21px] flex gap-[4px] text-[16px] leading-6"><Fit w={74}>Copyright</Fit><Fit w={125} className="font-bold">@KaizMerchant</Fit></p>
    </main>
  );
}

export default function App() {
  return (
    <div className="flex h-[1080px] w-[1920px] flex-col overflow-hidden font-['Noto_Sans',sans-serif]">
      <TopBar />
      <div className="flex min-h-0 flex-1">
        <Dock />
        <div className="flex min-w-0 flex-1 flex-col">
          <TabStrip />
          <Toolbar />
          <Bookmarks />
          <NavBar />
          <Game />
        </div>
      </div>
    </div>
  );
}
